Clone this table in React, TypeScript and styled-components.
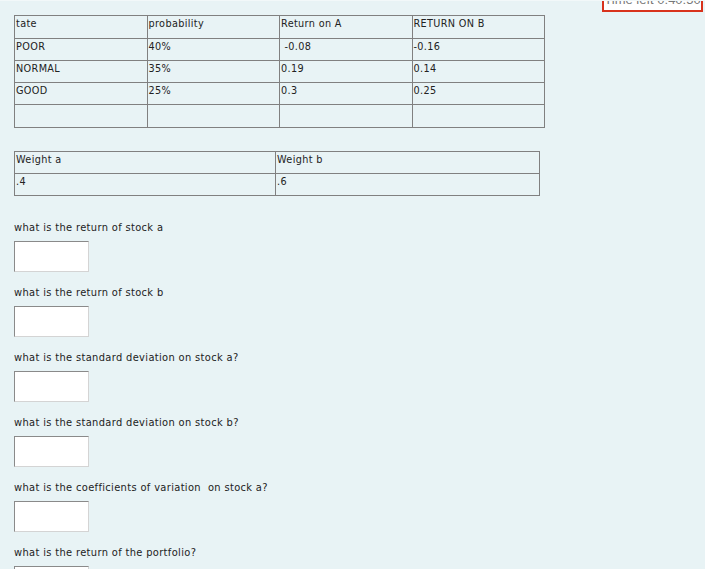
import React from "react";
import styled, { createGlobalStyle } from "styled-components";

const Global = createGlobalStyle`
  html, body { margin: 0; padding: 0; background: #e8f3f5; }
  body { font-family: "DejaVu Sans", Verdana, sans-serif; color: #222; }
`;

const Page = styled.div`
  position: relative;
  height: 569px;
  overflow: hidden;
  border-top: 1px solid #f2f8f9;
  padding: 14px 0 0 14px;
  box-sizing: border-box;
`;

const Timer = styled.div`
  position: absolute;
  top: -13px;
  left: 602px;
  width: 97px;
  height: 20px;
  background: #fff;
  border: 2px solid #d8321c;
  font-family: "Liberation Sans", Arial, sans-serif;
  font-size: 13px;
  color: #777;
  text-align: center;
  line-height: 20px;
  white-space: nowrap;
  overflow: hidden;
`;

const Grid = styled.table<{ $w: number }>`
  border-collapse: collapse;
  width: ${(p) => p.$w}px;
  table-layout: fixed;
  font-size: 9.7px;
  letter-spacing: 0.35px;
`;

const Cell = styled.td<{ $h?: number }>`
  border: 1px solid #808080;
  height: ${(p) => p.$h ?? 22}px;
  padding: 2px 1px 0 1px;
  vertical-align: top;
  box-sizing: border-box;
  white-space: pre;
  line-height: 12px;
  overflow: hidden;
`;

const Weights = styled(Grid)`
  margin-top: 23px;
`;

const Questions = styled.div`
  margin-top: 26px;
  display: flex;
  flex-direction: column;
`;

const Question = styled.div`
  margin-top: 15px;
  font-size: 9.9px;
  letter-spacing: 0.35px;
  line-height: 12px;
  white-space: pre;
  &:first-child { margin-top: 0; }
`;

const Answer = styled.input`
  display: block;
  margin-top: 7px;
  width: 75px;
  height: 31px;
  box-sizing: border-box;
  background: #fff;
  border: 1px solid;
  border-color: #8a8a8a #d4d4d4 #d4d4d4 #8a8a8a;
  padding: 0;
  outline: none;
`;

const rows = [
  ["tate", "probability", "Return on A", "RETURN ON B"],
  ["POOR", "40%", " -0.08", "-0.16"],
  ["NORMAL", "35%", "0.19", "0.14"],
  ["GOOD", "25%", "0.3", "0.25"],
  ["", "", "", ""],
];

const questions = [
  "what is the return of stock a",
  "what is the return of stock b",
  "what is the standard deviation on stock a?",
  "what is the standard deviation on stock b?",
  "what is the coefficients of variation  on stock a?",
  "what is the return of the portfolio?",
];

export default function App() {
  return (
    <Page>
      <Global />
      <Timer>Time left 0:40:50</Timer>
      <Grid $w={531}>
        <tbody>
          {rows.map((r, i) => (
            <tr key={i}>
              {r.map((c, j) => (
                <Cell key={j} $h={i === 0 || i === 4 ? 23 : 22}>
                  {c}
                </Cell>
              ))}
            </tr>
          ))}
        </tbody>
      </Grid>
      <Weights $w={526}>
        <colgroup>
          <col style={{ width: 261 }} />
          <col />
        </colgroup>
        <tbody>
          <tr>
            <Cell>Weight a</Cell>
            <Cell>Weight b</Cell>
          </tr>
          <tr>
            <Cell>.4</Cell>
            <Cell>.6</Cell>
          </tr>
        </tbody>
      </Weights>
      <Questions>
        {questions.map((q, i) => (
          <React.Fragment key={i}>
            <Question>{q}</Question>
            <Answer type="text" aria-label={q} />
          </React.Fragment>
        ))}
      </Questions>
    </Page>
  );
}
